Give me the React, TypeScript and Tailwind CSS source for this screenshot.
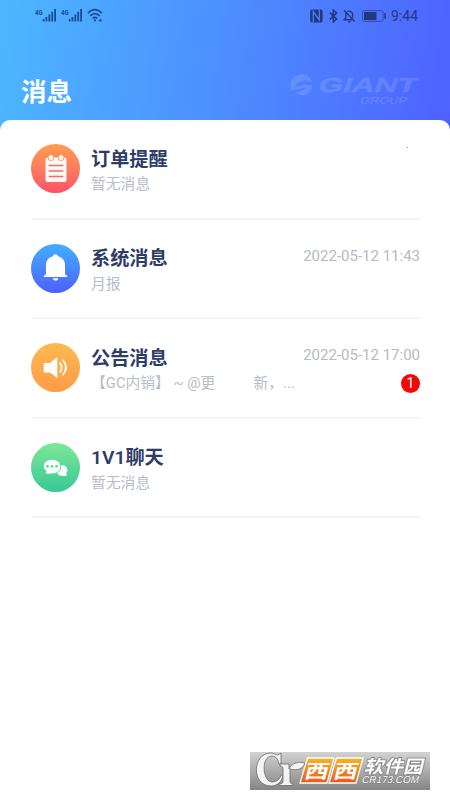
import React from 'react';

interface Message {
  id: string;
  title: string;
  preview: React.ReactNode;
  time?: string;
  unread?: number;
  circle: string;
  icon: React.ReactNode;
}

const NoteIcon: React.FC = () => (
  <svg viewBox="0 0 49 49" className="w-full h-full">
    <rect x="14.5" y="13.5" width="21" height="24.5" rx="2.5" fill="#fffaf6" />
    <circle cx="20" cy="13.5" r="3.2" fill="#fc8654" />
    <circle cx="30" cy="13.5" r="3.2" fill="#fc8654" />
    <circle cx="20" cy="13.5" r="2.5" fill="#fffaf6" />
    <circle cx="30" cy="13.5" r="2.5" fill="#fffaf6" />
    <path d="M18.2 21.4h13.6M18.2 27h13.6M18.2 32.6h13.6" stroke="#f96d5d" strokeWidth="1.5" strokeLinecap="round" />
  </svg>
);

const BellIcon: React.FC = () => (
  <svg viewBox="0 0 49 49" className="w-full h-full" fill="#fff">
    <path d="M24.5 10.2c1.3 0 2.3.8 2.4 2C31.4 13.3 34 16.6 34 21v8c0 1.2.5 2 2 2.8.8.5.5 1.2-.3 1.2H13.3c-.8 0-1.1-.7-.3-1.2 1.5-.8 2-1.6 2-2.8v-8c0-4.4 2.6-7.7 7.1-8.8.1-1.2 1.1-2 2.4-2z" />
    <path d="M21.7 34.3h5.8c-.4 1.6-1.5 2.3-2.9 2.3s-2.5-.7-2.9-2.3z" />
  </svg>
);

const SpeakerIcon: React.FC = () => (
  <svg viewBox="0 0 49 49" className="w-full h-full">
    <path d="M13.5 20h5.5l6.3-5.2c.5-.4 1-.2 1 .5v18.4c0 .7-.5.9-1 .5L19 29.5h-5.5c-.5 0-.8-.3-.8-.8v-7.9c0-.5.3-.8.8-.8z" fill="#fff" />
    <path d="M29.2 20.3q2.9 4.4 0 8.6" fill="none" stroke="#fff" strokeWidth="1.8" strokeLinecap="round" />
    <path d="M32 17.3q5.9 7.2 0 14.5" fill="none" stroke="#fff" strokeWidth="1.8" strokeLinecap="round" />
  </svg>
);

const ChatIcon: React.FC = () => (
  <svg viewBox="0 0 49 49" className="w-full h-full">
    <path d="M31.3 22.3c3 0 5.1 2.1 5.1 4.9 0 1.4-.5 2.5-1.2 3.3l.5 2.4H31c-3.2 0-5.3-2.4-5.3-5.2s2.3-5.4 5.6-5.4z" fill="#f3fff8" />
    <path d="M21 16.2c5.2 0 8.8 3.2 8.8 7.3s-3.6 7.5-8.8 7.5h-6.7l.8-3c-1.7-1.2-2.8-2.8-2.8-4.7 0-4 3.7-7.1 8.7-7.1z" fill="#f3fff8" stroke="#5bd997" strokeWidth="1" />
    <g fill="#4ed095">
      <circle cx="16.5" cy="23.3" r="1.2" />
      <circle cx="21" cy="23.3" r="1.2" />
      <circle cx="25.5" cy="23.3" r="1.2" />
    </g>
  </svg>
);

const messages: Message[] = [
  {
    id: 'order',
    title: '订单提醒',
    preview: '暂无消息',
    circle: 'bg-linear-to-b from-[#ff9d50] to-[#fa5269]',
    icon: <NoteIcon />,
  },
  {
    id: 'system',
    title: '系统消息',
    preview: '月报',
    time: '2022-05-12 11:43',
    circle: 'bg-linear-to-b from-[#45adff] to-[#4b5fff]',
    icon: <BellIcon />,
  },
  {
    id: 'notice',
    title: '公告消息',
    preview: (
      <>
        <span>【GC内销】 ~ @更</span>
        <span className="ml-[38px]">新，...</span>
      </>
    ),
    time: '2022-05-12 17:00',
    unread: 1,
    circle: 'bg-linear-to-b from-[#fcb94e] to-[#ff9b48]',
    icon: <SpeakerIcon />,
  },
  {
    id: 'chat',
    title: '1V1聊天',
    preview: '暂无消息',
    circle: 'bg-linear-to-b from-[#7be898] to-[#36c795]',
    icon: <ChatIcon />,
  },
];

const SignalIcon: React.FC = () => (
  <svg width="22" height="15" viewBox="0 0 22 15" fill="#174b91">
    <text x="0" y="6.5" fontSize="7" fontWeight="700" textLength="7.5" lengthAdjust="spacingAndGlyphs" fontFamily="Roboto">4G</text>
    <rect x="7.7" y="11" width="1.8" height="2.5" />
    <rect x="10.5" y="9" width="1.8" height="4.5" />
    <rect x="13.4" y="6.5" width="1.8" height="7" />
    <rect x="16.3" y="3.8" width="1.8" height="9.7" />
    <rect x="19.2" y="1" width="1.8" height="12.5" />
  </svg>
);

const WifiIcon: React.FC = () => (
  <svg width="17" height="15" viewBox="0 0 17 15" fill="none" stroke="#174b91" strokeWidth="1.6">
    <path d="M.8 5.2Q7.8-1.9 15 5.2M3.2 7.9Q7.9 3.3 12.7 7.9M5.5 10.4Q8 8.3 10.4 10.4" />
    <circle cx="7.9" cy="12.4" r="1.1" fill="#174b91" stroke="none" />
    <path d="M12 12l1.2 1.2M13.9 10.8v2.6" strokeWidth="1.2" />
  </svg>
);

const StatusBar: React.FC = () => (
  <div className="flex h-[30px] items-center justify-between pl-[35px] pr-[32px]">
    <div className="flex items-center gap-1">
      <SignalIcon />
      <SignalIcon />
      <WifiIcon />
    </div>
    <div className="flex items-center pt-px text-[#24387e]">
      <svg width="13" height="14" viewBox="0 0 13 14" className="mr-1.5">
        <rect x=".2" y=".5" width="12.4" height="13" rx="1.8" fill="currentColor" />
        <path d="M3.3 13.5V2.6l6 8.4V.5M3.3 2.6l6 8.4" fill="none" stroke="#4c7cfa" strokeWidth="1.3" />
      </svg>
      <svg width="9" height="14" viewBox="0 0 9 14" className="mr-[5px]" fill="none" stroke="currentColor" strokeWidth="1.5">
        <path d="M.8 3.6l6.8 6.5-3.3 3V1l3.3 3-6.8 6.4" />
      </svg>
      <svg width="13" height="14" viewBox="0 0 13 14" className="mr-1.5" fill="none" stroke="currentColor" strokeWidth="1.4">
        <path d="M1 1.2l10.7 11.3M2.8 4.3v4.8L1 10.800h8M4.5 2.7Q6.3 1.5 8.1 2.8q1.5 1.1 1.5 3v2.9M5 12.8h2.5" />
      </svg>
      <svg width="25" height="12" viewBox="0 0 25 12" className="mr-1">
        <rect x=".6" y=".6" width="20.6" height="10.8" rx="2" fill="none" stroke="currentColor" strokeOpacity=".65" />
        <rect x="2" y="2" width="12.5" height="8" rx=".5" fill="currentColor" />
        <rect x="22.3" y="3" width="1.5" height="6" rx=".7" fill="currentColor" />
      </svg>
      <span className="text-[14px] leading-5">9:44</span>
    </div>
  </div>
);

const GiantLogo: React.FC = () => (
  <svg width="134" height="36" viewBox="0 0 134 36" fill="#fff" fillOpacity=".12">
    <path d="M2 7C5 1 15-1 20 5l2 4C14 6 7 8 5 14l9-2h8c0 9-9 13-16 8l5-2 6-3C11 14 6 18 1 17c-1-4-1-7 1-10z" />
    <g fontWeight="700" fontFamily="Liberation Sans">
      <text x="33" y="18.5" fontSize="20" textLength="98" lengthAdjust="spacingAndGlyphs" stroke="#fff" strokeOpacity=".05" strokeWidth="1.4" transform="skewX(-18)">GIANT</text>
      <text x="77" y="31" fontSize="10.5" textLength="47" lengthAdjust="spacingAndGlyphs" transform="skewX(-14)">GROUP</text>
    </g>
  </svg>
);

const MessageRow: React.FC<{ message: Message }> = ({ message }) => (
  <li className="flex h-[99.5px] border-b-2 border-[#f5f5f6] pt-6">
    <div className={`h-[49px] w-[49px] shrink-0 rounded-full ${message.circle}`}>{message.icon}</div>
    <div className="ml-[11px] flex-1">
      <div className="flex h-[29px] items-center justify-between">
        <h2 className="pt-0.5 text-[19.2px] font-semibold leading-7 text-[#2e3c68]">{message.title}</h2>
        {message.time && <time className="pb-[5px] text-[15px] leading-6 text-[#b5bac7]">{message.time}</time>}
      </div>
      <div className="flex h-[22px] items-center justify-between">
        <p className="whitespace-nowrap text-[14.8px] leading-6 text-[#b8bccb]">{message.preview}</p>
        {message.unread && (
          <span className="flex h-[19px] w-[19px] items-center justify-center rounded-full bg-[#f60505] text-[14px] text-white">
            {message.unread}
          </span>
        )}
      </div>
    </div>
  </li>
);

const SiteBadge: React.FC = () => (
  <svg width="180" height="38" viewBox="0 0 180 38" className="block">
    <defs>
      <linearGradient id="badgeBg" x1="0" y1="0" x2="0" y2="1">
        <stop offset="0" stopColor="#d2d2d2" />
        <stop offset="1" stopColor="#858585" />
      </linearGradient>
      <linearGradient id="badgeOrange" x1="0" y1="0" x2="0" y2="1">
        <stop offset="0" stopColor="#fbb424" />
        <stop offset="1" stopColor="#e8581f" />
      </linearGradient>
    </defs>
    <rect width="180" height="38" fill="url(#badgeBg)" />
    <g fill="#f4f4f4" stroke="#6b6b6b" strokeWidth=".8">
      <path d="M31 1v11h-2c-1-5-3-8-7-8-11 0-10 25 0 26 5 0 8-3 9-7h2c-1 7-6 11-12 11C1 34 2 1 21 1c3 0 5 2 7 2z" />
      <path d="M30 12h9v5c2-5 8-8 16-6-2 6-8 8-15 6v12c0 2 1 3 3 3v1.5H29V32c3 0 4-1 4-3V17c0-2-1-3-3-3z" />
    </g>
    <g fill="url(#badgeOrange)" stroke="#fff" strokeWidth="1.3">
      <path d="M57.5 6H84l-7 25H50z" />
      <path d="M86.5 6H113l-7 25H79z" />
    </g>
    <g transform="skewX(-14)" fill="#fff" fontFamily="Noto Sans CJK SC">
      <text x="60" y="25.7" fontSize="19" fontWeight="700" textLength="24" lengthAdjust="spacingAndGlyphs">西</text>
      <text x="89" y="25.7" fontSize="19" fontWeight="700" textLength="24" lengthAdjust="spacingAndGlyphs">西</text>
      <text x="119" y="21" fontSize="18" fontWeight="700" textLength="59" lengthAdjust="spacingAndGlyphs" stroke="#777" strokeWidth="1.4" paintOrder="stroke">软件园</text>
      <text x="119" y="31" fontSize="10" fontWeight="400" textLength="57" lengthAdjust="spacingAndGlyphs" stroke="#777" strokeWidth="1" paintOrder="stroke" fontFamily="Liberation Sans">CR173.COM</text>
    </g>
  </svg>
);

const App: React.FC = () => (
  <div className="flex h-[800px] w-[450px] flex-col overflow-hidden bg-white font-['Roboto','Noto_Sans_CJK_SC',sans-serif]">
    <header className="-mb-2.5 h-[130px] shrink-0 bg-linear-[98deg,#4db7ff_0%,#4d8cff_52%,#4e62ff_100%]">
      <StatusBar />
      <div className="flex items-start justify-between pl-[21px] pr-[26px] pt-[43px]">
        <h1 className="pt-px text-[25.5px] font-bold leading-9 text-white">消息</h1>
        <GiantLogo />
      </div>
    </header>
    <main className="relative flex-1 rounded-t-[10px] bg-white pl-[31px] pr-[30px]">
      <ul>
        {messages.map(message => (
          <MessageRow key={message.id} message={message} />
        ))}
      </ul>
      <span className="absolute left-[407px] top-[27px] h-px w-px bg-[#44bcc8]" />
    </main>
    <footer className="flex h-12 shrink-0 justify-end pr-5">
      <SiteBadge />
    </footer>
  </div>
);

export default App;
